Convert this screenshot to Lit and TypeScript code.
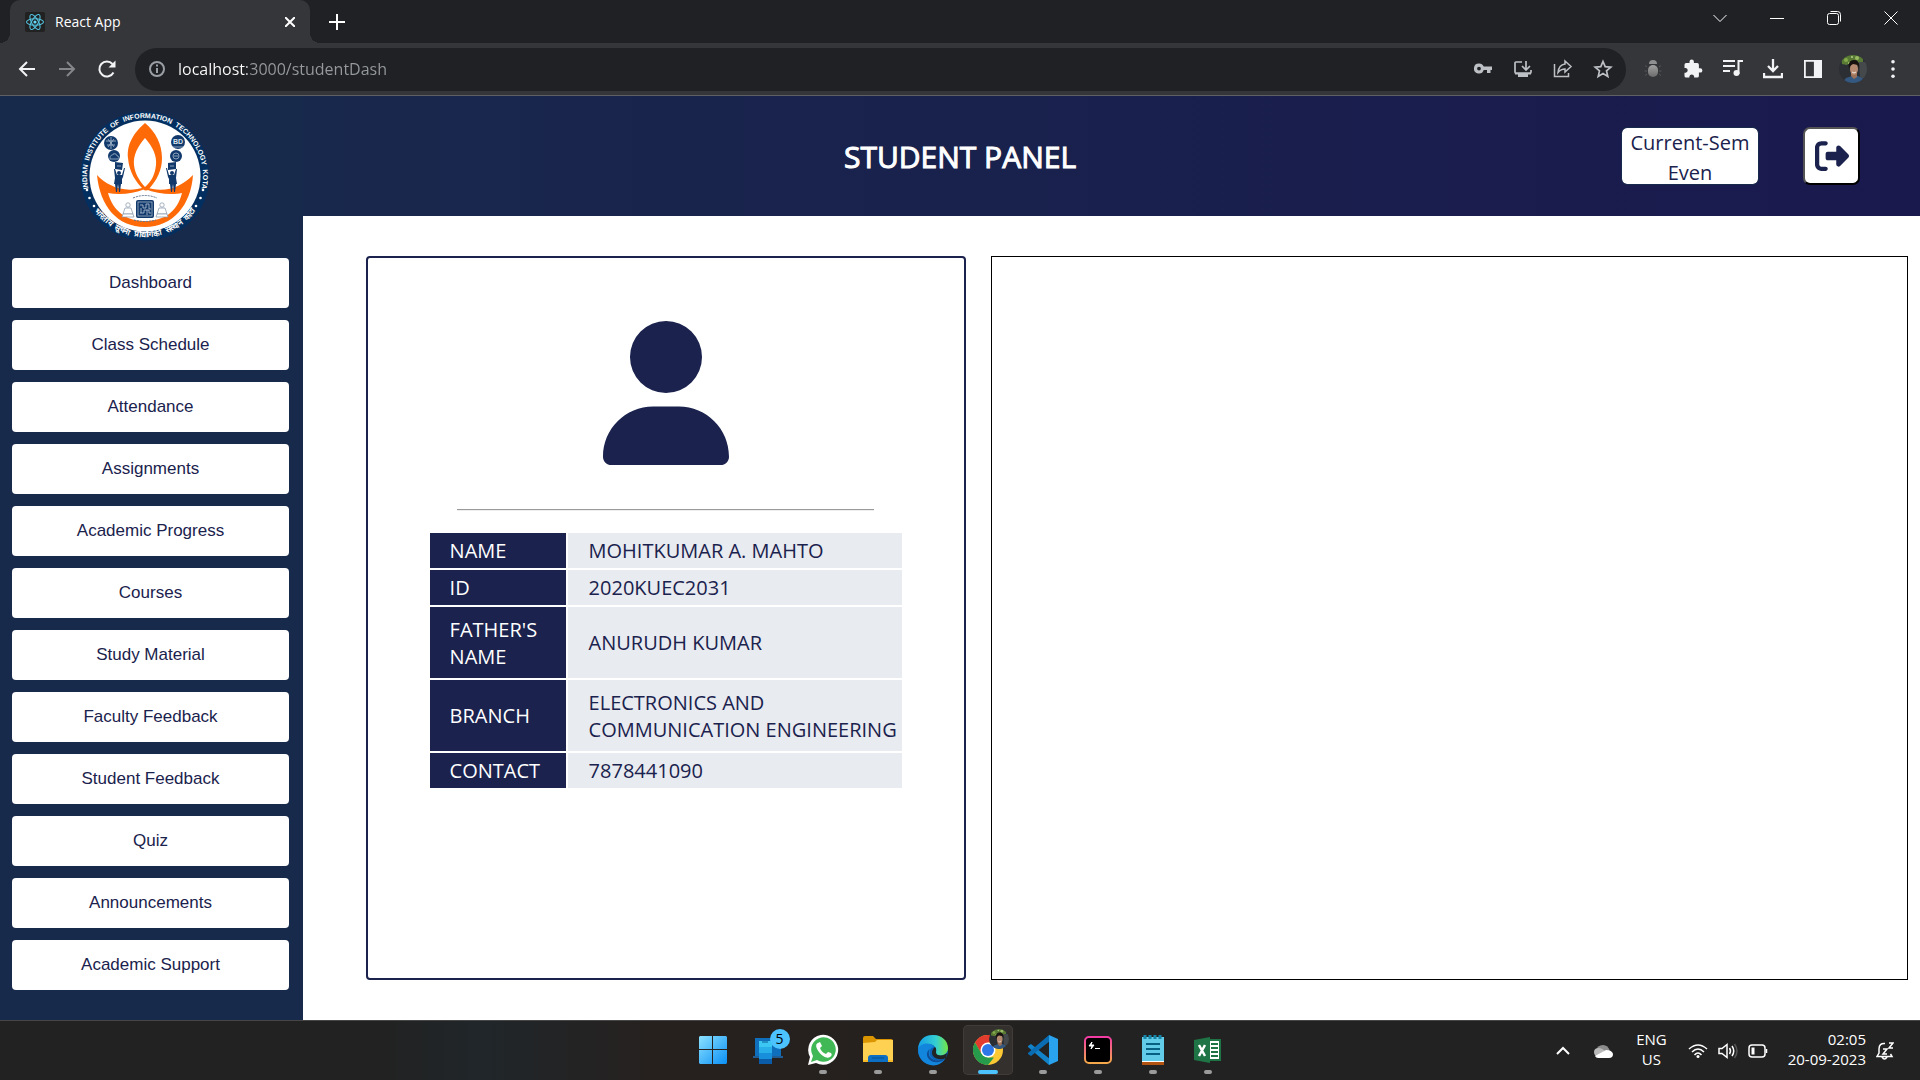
import { LitElement, html, css, svg } from "lit";
import { customElement } from "lit/decorators.js";

const NAV = [
  "Dashboard", "Class Schedule", "Attendance", "Assignments", "Academic Progress", "Courses",
  "Study Material", "Faculty Feedback", "Student Feedback", "Quiz", "Announcements", "Academic Support",
];

const PROFILE: { label: string; value: string; tall?: boolean }[] = [
  { label: "NAME", value: "MOHITKUMAR A. MAHTO" },
  { label: "ID", value: "2020KUEC2031" },
  { label: "FATHER'S NAME", value: "ANURUDH KUMAR", tall: true },
  { label: "BRANCH", value: "ELECTRONICS AND COMMUNICATION ENGINEERING", tall: true },
  { label: "CONTACT", value: "7878441090" },
];

const icon = (body: unknown, size = 20, box = "0 0 20 20") =>
  html`<svg width=${size} height=${size} viewBox=${box} fill="none" stroke="currentColor" stroke-width="2" aria-hidden="true">${body}</svg>`;

/* Small round portrait used in the toolbar and on the taskbar. */
const portrait = (size: number) => html`<svg width=${size} height=${size} viewBox="0 0 28 28" aria-hidden="true">
  <defs><clipPath id="round"><circle cx="14" cy="14" r="14"/></clipPath></defs>
  <g clip-path="url(#round)">
    <rect width="28" height="28" fill="#2b2f33"/>
    <path d="M2 0H24V8L20 9 17 5 12 6 8 10 3 9z" fill="#587a35"/>
    <circle cx="7" cy="5" r="2" fill="#86aa4a"/><circle cx="18" cy="3" r="2" fill="#9bbb62"/><circle cx="13" cy="2" r="1" fill="#b6cf88"/><circle cx="10" cy="8" r="1" fill="#a9c96c"/>
    <path d="M20 7h8v16h-7z" fill="#45494c"/>
    <path d="M3 28l4-5 6-2h6l6 3 2 4z" fill="#34587f"/>
    <path d="M12 17h6v5l-3 2-3-3z" fill="#9a7058"/>
    <ellipse cx="15" cy="14" rx="4" ry="6" fill="#b58a70"/>
    <path d="M10 14c-1-6 1-9 5-9s6 3 5 9l-1-4-5-1-3 2z" fill="#17120f"/>
    <path d="M13 17q2 2 4 0" stroke="#f1e6df" fill="none"/>
  </g></svg>`;

const favicon = html`<svg width="20" height="20" viewBox="0 0 20 20" aria-hidden="true">
  <rect width="20" height="20" rx="2" fill="#212121"/>
  <g fill="none" stroke="#53c1de" stroke-width="1.100">
    <ellipse cx="10" cy="10" rx="8.500" ry="3.300"/>
    <ellipse cx="10" cy="10" rx="8.500" ry="3.300" transform="rotate(60 10 10)"/>
    <ellipse cx="10" cy="10" rx="8.500" ry="3.300" transform="rotate(120 10 10)"/>
  </g><circle cx="10" cy="10" r="1.600" fill="#61dafb"/></svg>`;

const barIcons = {
  back: icon(svg`<path d="M18 10H3M10 3l-7 7 7 7"/>`),
  forward: icon(svg`<path d="M2 10h15M10 3l7 7-7 7"/>`),
  reload: icon(svg`<path d="M16.500 13.500A7.500 7.500 0 1 1 15.500 5"/><path d="M18.500 1.500v7h-7z" fill="currentColor" stroke="none"/>`),
  info: icon(svg`<circle cx="10" cy="10" r="7"/><path d="M10 9v5M10 5.500v2"/>`),
  key: icon(svg`<path d="M6 4.500a5 5 0 1 0 4.700 6.500H14v3h3.500v-3H19V7.500h-8.300A5 5 0 0 0 6 4.500zm0 3.200a1.900 1.900 0 1 1 0 3.800 1.900 1.900 0 0 1 0-3.800z" fill="currentColor" fill-rule="evenodd" stroke="none"/>`),
  install: icon(svg`<path d="M9 3H3q-1 0-1 1v9q0 1 1 1h14q1 0 1-1v-2M13 2v8M9 7l4 4 4-4" stroke-width="1.700"/><path d="M2 14h16v1.500h-3V18H5v-2.500H2z" fill="currentColor" stroke="none"/>`),
  share: icon(svg`<path d="M1.500 5v12.500h14V14" stroke-width="1.500"/><path d="M12 2l6 5.500-6 5.500v-3c-3 0-5 1-7 3.500.500-5 3-8 7-8.500z" stroke-width="1.500"/>`),
  star: icon(svg`<path d="M10 2.500l2.200 5.200 5.600.500-4.300 3.700 1.300 5.500L10 14.500l-4.800 2.900 1.300-5.500L2.200 8.200l5.600-.500z" stroke-width="1.700"/>`),
  bug: html`<svg width="20" height="20" viewBox="0 0 20 20" aria-hidden="true"><defs><linearGradient id="bug" x2="0" y2="1"><stop stop-color="#a2a2a2"/><stop offset="1" stop-color="#6b6b6b"/></linearGradient></defs>
    <path d="M6 5q0-4 4-4t4 4z" fill="#8f9092"/><rect x="5" y="6" width="10" height="12" rx="5" fill="url(#bug)"/>
    <path d="M4 8L2 6.500M4 12H1.500M4 15l-2 1.500M16 8l2-1.500M16 12h2.500M16 15l2 1.500" stroke="#55565a"/></svg>`,
  puzzle: icon(svg`<path d="M17.200 9.200h-1.300V5.800q0-1.700-1.700-1.700h-3.300V2.800a2.200 2.200 0 0 0-4.400 0v1.300H3.200q-1.700 0-1.700 1.700V9h1.300a2.400 2.400 0 0 1 0 4.700H1.500v3.200q0 1.700 1.700 1.700h3.200v-1.300a2.400 2.400 0 0 1 4.700 0v1.300h3.100q1.700 0 1.700-1.700v-3.300h1.300a2.200 2.200 0 0 0 0-4.400z" fill="currentColor" stroke="none"/>`),
  queue: icon(svg`<path d="M0 2h12M0 7h12M0 12h7M15.500 15V2H20"/><circle cx="13.500" cy="14" r="3" fill="currentColor" stroke="none"/>`),
  download: icon(svg`<path d="M10 0v11M5 7l5 5 5-5M1 14v4h18v-4" stroke-width="2.300"/>`),
  panel: icon(svg`<path d="M1 1h18v18H1z"/><path d="M12 1h7v18h-7z" fill="currentColor"/>`, 18),
  dots: icon(svg`<g fill="currentColor" stroke="none"><circle cx="10" cy="2" r="2"/><circle cx="10" cy="10" r="2"/><circle cx="10" cy="18" r="2"/></g>`, 18),
};

const person = (x: number, flip: number) => svg`<g transform="translate(${x} 63) scale(${flip} 1)" fill="#12396b">
  <circle cx="0" cy="-1" r="2"/><path d="M-5-5l1 0 2 6h5l2-7 1 0-2 9-1 2v5h-1l-1 8h-1l-1-8-1 8h-1l-1-8-1 0 1-6z"/></g>`;

/* Seated figure beside the chip emblem. */
const sitter = (x: number) => svg`<g transform="translate(${x} 92)" fill="#fff" stroke="#8393a8" stroke-width=".700">
  <circle cx="5" cy="2" r="2.200"/><path d="M2 5h6l2 6H0z"/><path d="M0 11h10l1 3H-1z"/></g>`;

const crest = html`<svg class="crest" viewBox="0 0 130 130" role="img" aria-label="Indian Institute of Information Technology Kota">
  <defs>
    <path id="arc-top" d="M12.400 89.500A58 58 0 1 1 117.600 89.500"/>
    <path id="arc-bottom" d="M8.600 89A61.300 61.300 0 0 0 121.400 89"/>
  </defs>
  <circle cx="65" cy="65" r="64.500" fill="#032f60"/>
  <circle cx="65" cy="65" r="55.500" fill="#fff"/>
  <g class="ring-text">
    <text><textPath href="#arc-top" startOffset="50%" text-anchor="middle">INDIAN&nbsp; INSTITUTE&nbsp; OF&nbsp; INFORMATION&nbsp; TECHNOLOGY&nbsp; KOTA</textPath></text>
    <text class="hindi"><textPath href="#arc-bottom" startOffset="50%" text-anchor="middle">भारतीय&nbsp; सूचना&nbsp; प्रौद्योगिकी&nbsp; संस्थान&nbsp; कोटा</textPath></text>
  </g>
  <g fill="#fff"><circle cx="7" cy="79" r="1.300"/><circle cx="9.500" cy="87" r="1.300"/><circle cx="14" cy="95" r="1.300"/><circle cx="123" cy="79" r="1.300"/><circle cx="120.500" cy="87" r="1.300"/><circle cx="116" cy="95" r="1.300"/></g>
  <path fill="#ff6a08" fill-rule="evenodd" d="M65 12C50 25 47 37 48 47c1 14 8 24 15 31 2 2 4 2 6 0 8-9 13-19 13-31 0-13-6-26-17-35zM65 27c8 9 12 18 11 27-1 10-5 17-11 22-6-7-10-13-11-22-1-10 4-19 11-27z"/>
  <path fill="#ff6a08" fill-rule="evenodd" d="M17 64c10 11 28 19 48 12 20 7 36 0 48-12-2 30-20 52-48 52S20 95 17 64zM28 82c5 18 18 28 37 28s32-9 37-28c-10 2-25 1-37-4-12 5-26 6-37 4z"/>
  <g fill="#12396b"><circle cx="31" cy="32" r="7"/><circle cx="34" cy="45" r="6"/><path d="M35 51l8 1-1 7-7-1z"/><circle cx="98" cy="31" r="7"/><circle cx="96" cy="45" r="6"/><path d="M88 52l8-1v7l-8 1z"/></g>
  <g fill="none" stroke="#a8bdd0" stroke-width=".800"><path d="M26 30h10M27 34h8M31 26v12M28 28l6 8M34 28l-6 8"/><path d="M30 47c0-4 3-2 3-4 3-1 4 1 4 2 3 0 2 3 0 3h-7zM37 55h4"/><circle cx="96" cy="45" r="3"/><path d="M94 45h4M90 55h4M93 36h10"/></g>
  <text class="badge-text" x="93" y="33">BD</text>
  ${person(39, 1)}${person(92, -1)}
  ${sitter(43)}${sitter(77)}
  <g><rect x="56" y="89" width="18" height="18" rx="2" fill="#12396b"/><rect x="58" y="91" width="14" height="14" fill="none" stroke="#b6c5d5" stroke-width=".700"/>
  <path d="M60 94h3v3h3v-4h3v5h2M60 102h4v-3h5v3h2M61 97v5M67 99v5" stroke="#b6c5d5" fill="none" stroke-width=".800"/></g>
  <path d="M53 87q12-5 24 0M54 109q11 3 22 0" stroke="#60758e" stroke-dasharray="2 1" fill="none"/>
</svg>`;

const taskIcons = {
  start: html`<svg width="30" height="30" viewBox="0 0 30 30" aria-hidden="true"><defs><linearGradient id="win" x2="1" y2="1"><stop stop-color="#8ce2ff"/><stop offset="1" stop-color="#0a8ff5"/></linearGradient></defs><path fill="url(#win)" d="M2 1h12v13H1V2zM15 1h13l1 1v12H15zM1 15h13v14H2l-1-1zM15 15h14v13l-1 1H15z"/></svg>`,
  link: html`<svg width="36" height="32" viewBox="0 0 36 32" aria-hidden="true"><path d="M5 4h26v18H5z" fill="#0f6fbd"/><path d="M3 22h30v2H3z" fill="#1f5d94"/><path d="M9 7h13v23H9z" fill="#178fdb"/><path d="M9 7h13v6H9z" fill="#3cc6f4"/><path d="M9 13h13v6H9z" fill="#28aee8"/><path d="M9 25h13v5H9z" fill="#0b5ca8"/><path d="M12 8h6" stroke="#0a5a94"/></svg>`,
  whatsapp: html`<svg width="32" height="32" viewBox="0 0 32 32" aria-hidden="true"><path d="M1 31l2-8A15 15 0 1 1 9 29z" fill="#fff"/><path d="M4 28l2-6A12.300 12.300 0 1 1 10 26z" fill="#40b856"/><path d="M11 9c-3 1-2 5 1 9s8 7 11 5c2-1 2-3 1-4l-3-1-2 2c-3-1-5-3-6-6l2-2-2-4z" fill="#fff"/></svg>`,
  files: html`<svg width="32" height="32" viewBox="0 0 32 32" aria-hidden="true"><path d="M1 4q0-2 2-2h8l3 3h15q2 0 2 2v8H1z" fill="#db9500"/><path d="M1 9l12-1 2-2h16v22H1z" fill="#ffd153"/><path d="M1 26h30v2H1z" fill="#f3b728"/><path d="M6 28v-4q0-3 3-3h14q3 0 3 3v4z" fill="#0d6fc4"/><path d="M10 24h12" stroke="#07508e"/></svg>`,
  edge: html`<svg width="32" height="32" viewBox="0 0 32 32" aria-hidden="true"><defs><linearGradient id="edge" x2="1"><stop stop-color="#159ee5"/><stop offset=".6" stop-color="#35cfd2"/><stop offset="1" stop-color="#73e544"/></linearGradient></defs><circle cx="16" cy="16" r="15" fill="#0b62b5"/><path d="M1 15C2 5 8 1 16 1c9 0 15 6 15 13 0 6-6 9-11 7l-2-3c2-4-1-8-6-8-5 0-9 2-11 5z" fill="url(#edge)"/><path d="M1 15c3-7 14-7 16-2-5 1-6 7-2 11s10 3 13 1c-4 6-11 8-18 5C4 27 1 22 1 15z" fill="#1285dc"/><path d="M13 15c-4 6 2 15 15 10-5 5-14 4-17-1-2-4-1-7 2-9z" fill="#0e4d98"/><path d="M18 13c3 3-1 6 3 8 3 1 7 0 9-2l-1 5c-6 3-14 0-14-5 0-3 1-4 3-6z" fill="#222323"/></svg>`,
  chrome: html`<svg width="30" height="30" viewBox="0 0 30 30" aria-hidden="true"><circle cx="15" cy="15" r="15" fill="#fcc934"/><path d="M2 7.500a15 15 0 0 1 26 0H15L8.500 19z" fill="#e33b2e"/><path d="M2 7.500l6.500 11.300 6.500 3.700h6L15 30A15 15 0 0 1 2 7.500z" fill="#269b4c"/><circle cx="15" cy="15" r="7.500" fill="#fff"/><circle cx="15" cy="15" r="6" fill="#2d77e8"/></svg>`,
  code: html`<svg width="32" height="32" viewBox="0 0 32 32" aria-hidden="true"><path d="M1 12l3-2 19 15-1 6L1 13z" fill="#1383c9"/><path d="M1 20l3 2L23 7l-1-6L1 19z" fill="#0a6db3"/><path d="M22 1l9 4v22l-9 4V1z" fill="#29a3ee"/><path d="M22 9l-9 7 9 7z" fill="#222323"/></svg>`,
  terminal: html`<svg width="30" height="30" viewBox="0 0 30 30" aria-hidden="true"><defs><linearGradient id="term" x2="0" y2="1"><stop stop-color="#f23ba5"/><stop offset="1" stop-color="#f5a94b"/></linearGradient></defs><rect x="2" y="2" width="26" height="26" rx="4" fill="#000" stroke="url(#term)" stroke-width="2"/><path d="M9 7l-3 4h3l-1 3 3-4H8zM12 13.500h5" stroke="#fff" fill="#fff"/></svg>`,
  notes: html`<svg width="26" height="32" viewBox="0 0 26 32" aria-hidden="true"><path d="M2 3h22v25H2z" fill="#62cbe8"/><path d="M2 28h22v3H2z" fill="#b35312"/><path d="M2 27h22v1H2z" fill="#fff"/><path d="M6 10h14M6 15h14M6 20h14" stroke="#075f82" stroke-width="2"/><path d="M5 1v4M10 1v4M15 1v4M20 1v4" stroke="#1686a8" stroke-width="3"/></svg>`,
  excel: html`<svg width="30" height="30" viewBox="0 0 30 30" aria-hidden="true"><path d="M16 5h11v20H16z" fill="#fff" stroke="#1f7446" stroke-width="2"/><path d="M18 9h7M18 13h7M18 17h7M18 21h7" stroke="#1f7446" stroke-width="2"/><path d="M1 5l16-3v26L1 25z" fill="#1f7446"/><path d="M6 10l6 11M12 10L6 21" stroke="#fff" stroke-width="2.500"/></svg>`,
};

@customElement("app-root")
export class AppRoot extends LitElement {
  static styles = css`
    :host { display: block; font-family: "Open Sans", "Noto Sans", sans-serif; color: #1a224d; }
    * { box-sizing: border-box; }
    button { font: inherit; color: inherit; border: 0; padding: 0; background: none; cursor: pointer; }
    svg { display: block; flex: none; }
    .screen { min-height: 100vh; display: flex; flex-direction: column; }

    .tabs { display: flex; height: 43px; background: #202124; padding: 0 1px 0 10px; color: #fff; }
    .tab { position: relative; width: 300px; display: flex; align-items: center; gap: 10px; padding: 0 10px 0 15px; background: #35363a; border-radius: 10px 10px 0 0; font-size: 14px; }
    .tab::before, .tab::after { content: ""; position: absolute; bottom: 0; width: 10px; height: 10px; }
    .tab::before { left: -10px; background: radial-gradient(circle at 0 0, #202124 10px, #35363a 10px); }
    .tab::after { right: -10px; background: radial-gradient(circle at 100% 0, #202124 10px, #35363a 10px); }
    .tab-title { flex: 1; }
    .cell { display: grid; place-items: center; }
    .tab .cell { width: 20px; height: 20px; }
    .new-tab { width: 34px; margin-left: 10px; }
    .window { display: flex; margin-left: auto; }
    .window .cell { width: 57px; height: 36px; }

    .toolbar { display: flex; align-items: center; height: 53px; padding: 0 7px; background: #35363a; border-bottom: 1px solid #5f6064; color: #f1f3f4; }
    .toolbar .cell { width: 40px; height: 40px; }
    .toolbar .dim { color: #84868a; }
    .address { flex: 1; height: 43px; margin: 0 7px 0 8px; padding: 0 3px 0 12px; display: flex; align-items: center; gap: 11px; background: #202124; border-radius: 22px; color: #bdc1c6; }
    .site { color: #9aa0a6; }
    .url { flex: 1; border: 0; outline: 0; padding: 0; font: 16px "Open Sans", "Noto Sans", sans-serif; -webkit-text-fill-color: transparent; background: linear-gradient(90deg, #fff 69px, #969a9e 69px); -webkit-background-clip: text; background-clip: text; }
    .address .actions { display: flex; }

    .page { flex: 1; display: grid; grid-template-columns: 303px minmax(0, 1fr); grid-template-rows: 120px minmax(0, 1fr); background: #fff; }
    .header { grid-area: 1 / 1 / 2 / 3; display: grid; grid-template-columns: 1fr auto 1fr; align-items: center; background: linear-gradient(90deg, #182a4c, #1a194e); padding: 0 60px; }
    .title { grid-column: 2; margin: 0; padding-top: 2px; color: #fff; font-size: 30px; line-height: 40px; font-weight: 400; -webkit-text-stroke: 1px #fff; }
    .header-actions { justify-self: end; display: flex; align-items: center; gap: 44px; }
    .semester { width: 138px; height: 58px; border: 1px solid #182a4c; border-radius: 6px; background: #fff; background-clip: padding-box; font-size: 20px; line-height: 30px; text-align: center; overflow: hidden; }
    .logout { width: 57px; height: 58px; display: grid; place-items: center; border: 2px outset #000; border-radius: 7px; background: #fff; color: #1a224d; }
    .sidebar { grid-area: 1 / 1 / 3 / 2; background: #182a4c; padding: 15px 14px 30px 12px; display: flex; flex-direction: column; align-items: center; }
    .crest { width: 130px; height: 130px; margin: 0 12px 17px 0; }
    .ring-text { fill: #fff; font: bold 7px "Liberation Sans", sans-serif; }
    .ring-text .hindi { font-size: 8px; }
    .badge-text { fill: #d8e2ec; font: bold 7px "Liberation Sans", sans-serif; }
    .nav { width: 100%; display: flex; flex-direction: column; gap: 12px; }
    .nav-item { height: 50px; border-radius: 4px; background: #fff; font: 17px "Liberation Sans", Arial, sans-serif; }

    .content { grid-area: 2 / 2; display: grid; grid-template-columns: 17fr 26fr; gap: 25px; padding: 40px 12px 40px 63px; }
    .profile { border: 2px solid #1a224d; border-radius: 4px; padding-top: 63px; display: flex; flex-direction: column; align-items: center; }
    .rule { width: 70%; margin: 44px 0 20px; border: 0; border-top: 1px solid #9a9a9a; border-bottom: 1px solid #eee; }
    .details { width: 80%; border-spacing: 2px; font-size: 20px; line-height: 27px; table-layout: fixed; }
    .details tr { height: 35px; }
    .details .tall { height: 71px; }
    .details th { width: 136px; padding: 0 20px; background: #1a224d; color: #fff; text-align: left; font-weight: 500; }
    .details td { padding: 0 0 0 21px; background: #e8ebf0; }
    .board { border: 1px solid #000; }

    .taskbar { display: grid; grid-template-columns: 1fr auto 1fr; align-items: stretch; height: 60px; border-top: 1px solid #464646; color: #fff; background: linear-gradient(90deg, #222 0, #222 20%, #20262a 25%, #26211f 34%, #25211f 50%, #222 56%); }
    .apps { grid-column: 2; display: flex; gap: 5px; }
    .app { position: relative; width: 50px; height: 50px; margin-top: 4px; display: grid; place-items: center; border-radius: 5px; }
    .app.running::after { content: ""; position: absolute; left: 21px; bottom: 1px; width: 8px; height: 4px; border-radius: 2px; background: #9b9b9b; }
    .app.active { background: #34302e; box-shadow: inset 0 0 0 1px #403c3a; }
    .app.active::after { left: 15px; width: 20px; background: #4cc2ff; }
    .count { position: absolute; top: 4px; right: 3px; width: 20px; height: 20px; border-radius: 50%; background: #4cc2ff; color: #000; font-size: 14px; line-height: 20px; }
    .face { position: absolute; top: 4px; right: 4px; }
    .tray { justify-self: end; display: flex; align-items: center; font-size: 15px; line-height: 20px; padding-right: 26px; }
    .tray .caret { margin-right: 20px; }
    .lang { margin: 0 21px 0 23px; padding-bottom: 4px; text-align: center; }
    .status { display: flex; gap: 10px; }
    .clock { margin: 0 10px 0 20px; padding-bottom: 4px; text-align: right; white-space: nowrap; }
  `;

  private tool(label: string, glyph: unknown, extra = "") {
    return html`<button class="cell ${extra}" aria-label=${label}>${glyph}</button>`;
  }

  private app(label: string, glyph: unknown, state = "running", extra: unknown = "") {
    return html`<button class="app ${state}" aria-label=${label}>${glyph}${extra}</button>`;
  }

  render() {
    const thin = (d: string) => html`<svg width="14" height="14" viewBox="0 0 14 14" fill="none" stroke="#fff" aria-hidden="true"><path d=${d}/></svg>`;
    return html`<div class="screen">
      <div class="tabs">
        <div class="tab">${favicon}<span class="tab-title">React App</span>
          ${this.tool("Close tab", html`<svg width="10" height="10" viewBox="0 0 10 10" stroke="#fff" stroke-width="2"><path d="M0 0l10 10M10 0L0 10"/></svg>`)}</div>
        ${this.tool("New tab", html`<svg width="16" height="16" viewBox="0 0 16 16" stroke="#fff" stroke-width="2"><path d="M8 0v16M0 8h16"/></svg>`, "new-tab")}
        <div class="window">
          ${this.tool("Search tabs", thin("M.5 4l6.500 6.500L13.500 4"))}
          ${this.tool("Minimize", thin("M0 7.500h14"))}
          ${this.tool("Restore", thin("M2.500 2.500h7q2 0 2 2v7q0 2-2 2h-7q-2 0-2-2v-7q0-2 2-2zM3.500.5h7q3 0 3 3v7"))}
          ${this.tool("Close", thin("M.5.5l13 13M13.500.5l-13 13"))}
        </div>
      </div>
      <div class="toolbar">
        ${this.tool("Back", barIcons.back)}${this.tool("Forward", barIcons.forward, "dim")}${this.tool("Reload", barIcons.reload)}
        <div class="address">
          <span class="site">${barIcons.info}</span>
          <input class="url" aria-label="Address" value="localhost:3000/studentDash" spellcheck="false">
          <div class="actions">
            ${this.tool("Passwords", barIcons.key)}${this.tool("Install", barIcons.install)}${this.tool("Share", barIcons.share)}${this.tool("Bookmark", barIcons.star)}
          </div>
        </div>
        ${this.tool("Debugger", barIcons.bug)}${this.tool("Extensions", barIcons.puzzle)}${this.tool("Media", barIcons.queue)}
        ${this.tool("Downloads", barIcons.download)}${this.tool("Side panel", barIcons.panel)}${this.tool("Profile", portrait(28))}${this.tool("Menu", barIcons.dots)}
      </div>

      <div class="page">
        <header class="header">
          <h1 class="title">STUDENT PANEL</h1>
          <div class="header-actions">
            <div class="semester">Current-Sem<br>Even</div>
            <button class="logout" aria-label="Log out"><svg width="34" height="34" viewBox="0 0 512 512" fill="currentColor" aria-hidden="true"><path d="M377.9 105.9L500.7 228.7c7.200 7.200 11.300 17.100 11.300 27.300s-4.100 20.100-11.300 27.300L377.900 406.100c-6.400 6.400-15 9.900-24 9.900c-18.700 0-33.900-15.200-33.900-33.900l0-62.100-128 0c-17.700 0-32-14.300-32-32l0-64c0-17.700 14.300-32 32-32l128 0 0-62.100c0-18.700 15.200-33.900 33.900-33.900c9 0 17.600 3.600 24 9.900zM160 96L96 96c-17.700 0-32 14.300-32 32l0 256c0 17.700 14.300 32 32 32l64 0c17.700 0 32 14.300 32 32s-14.300 32-32 32l-64 0c-53 0-96-43-96-96L0 128C0 75 43 32 96 32l64 0c17.700 0 32 14.300 32 32s-14.300 32-32 32z"/></svg></button>
          </div>
        </header>
        <aside class="sidebar">
          ${crest}
          <nav class="nav">${NAV.map((n) => html`<button class="nav-item">${n}</button>`)}</nav>
        </aside>
        <main class="content">
          <section class="profile">
            <svg width="126" height="144" viewBox="0 0 448 512" fill="#1a224d" aria-hidden="true"><path d="M224 256A128 128 0 1 0 224 0a128 128 0 1 0 0 256zm-45.700 48C79.800 304 0 383.800 0 482.300C0 498.700 13.300 512 29.700 512H418.300c16.400 0 29.700-13.300 29.700-29.700C448 383.800 368.200 304 269.700 304H178.300z"/></svg>
            <hr class="rule">
            <table class="details"><tbody>
              ${PROFILE.map((r) => html`<tr class=${r.tall ? "tall" : ""}><th scope="row">${r.label}</th><td>${r.value}</td></tr>`)}
            </tbody></table>
          </section>
          <section class="board"></section>
        </main>
      </div>

      <footer class="taskbar">
        <div class="apps">
          ${this.app("Start", taskIcons.start, "")}
          ${this.app("Phone Link", taskIcons.link, "", html`<span class="count">5</span>`)}
          ${this.app("WhatsApp", taskIcons.whatsapp)}
          ${this.app("File Explorer", taskIcons.files)}
          ${this.app("Edge", taskIcons.edge)}
          ${this.app("Chrome", taskIcons.chrome, "running active", html`<span class="face">${portrait(20)}</span>`)}
          ${this.app("Visual Studio Code", taskIcons.code)}
          ${this.app("Terminal", taskIcons.terminal)}
          ${this.app("Notepad", taskIcons.notes)}
          ${this.app("Excel", taskIcons.excel)}
        </div>
        <div class="tray">
          <svg class="caret" width="20" height="20" viewBox="0 0 20 20" fill="none" stroke="#fff" stroke-width="2"><path d="M4 13l6-6 6 6"/></svg>
          <svg width="20" height="20" viewBox="0 0 20 20"><path d="M3 10q1-6 7-6 5 0 7 6l-7 4z" fill="#8c8c8c"/><path d="M1 11q0-4 5-4 3 0 6 3l-5 6q-6 0-6-5z" fill="#b9b9b9"/><path d="M2 15l11-6q6 0 7 4 0 4-4 4H5q-2 0-3-2z" fill="#fff"/></svg>
          <div class="lang">ENG<br>US</div>
          <div class="status">
            <svg width="20" height="20" viewBox="0 0 20 20" fill="none" stroke="#fff" stroke-width="1.500"><path d="M1 8q9-8 18 0M4 11q6-6 12 0M6.500 14q3.500-4 7 0"/><circle cx="10" cy="15.500" r="1.500" fill="#fff" stroke="none"/></svg>
            <svg width="20" height="20" viewBox="0 0 20 20" fill="none" stroke="#fff" stroke-width="1.500"><path d="M1 7.500h3l5-4v13l-5-4H1zM11.500 7q2 3 0 6M14 5q3.500 5 0 10"/><path d="M16.500 3q5 7 0 14" stroke="#555"/></svg>
            <svg width="20" height="20" viewBox="0 0 20 20" fill="none" stroke="#fff" stroke-width="1.500"><rect x="1" y="4" width="16" height="12" rx="3"/><path d="M18.500 8v4"/><path d="M3.500 6.500h3v7h-3z" fill="#fff" stroke="none"/></svg>
          </div>
          <div class="clock">02:05<br>20-09-2023</div>
          <svg width="18" height="20" viewBox="0 0 18 20" fill="none" stroke="#fff" stroke-width="1.500"><path d="M9 2.500Q3 2 3 8v4l-2 3.500h15L14.500 13M6 16q2.500 4 5 0"/><path d="M7 8h4l-4 5h4M13 2h4l-4 5h4"/></svg>
        </div>
      </footer>
    </div>`;
  }
}
